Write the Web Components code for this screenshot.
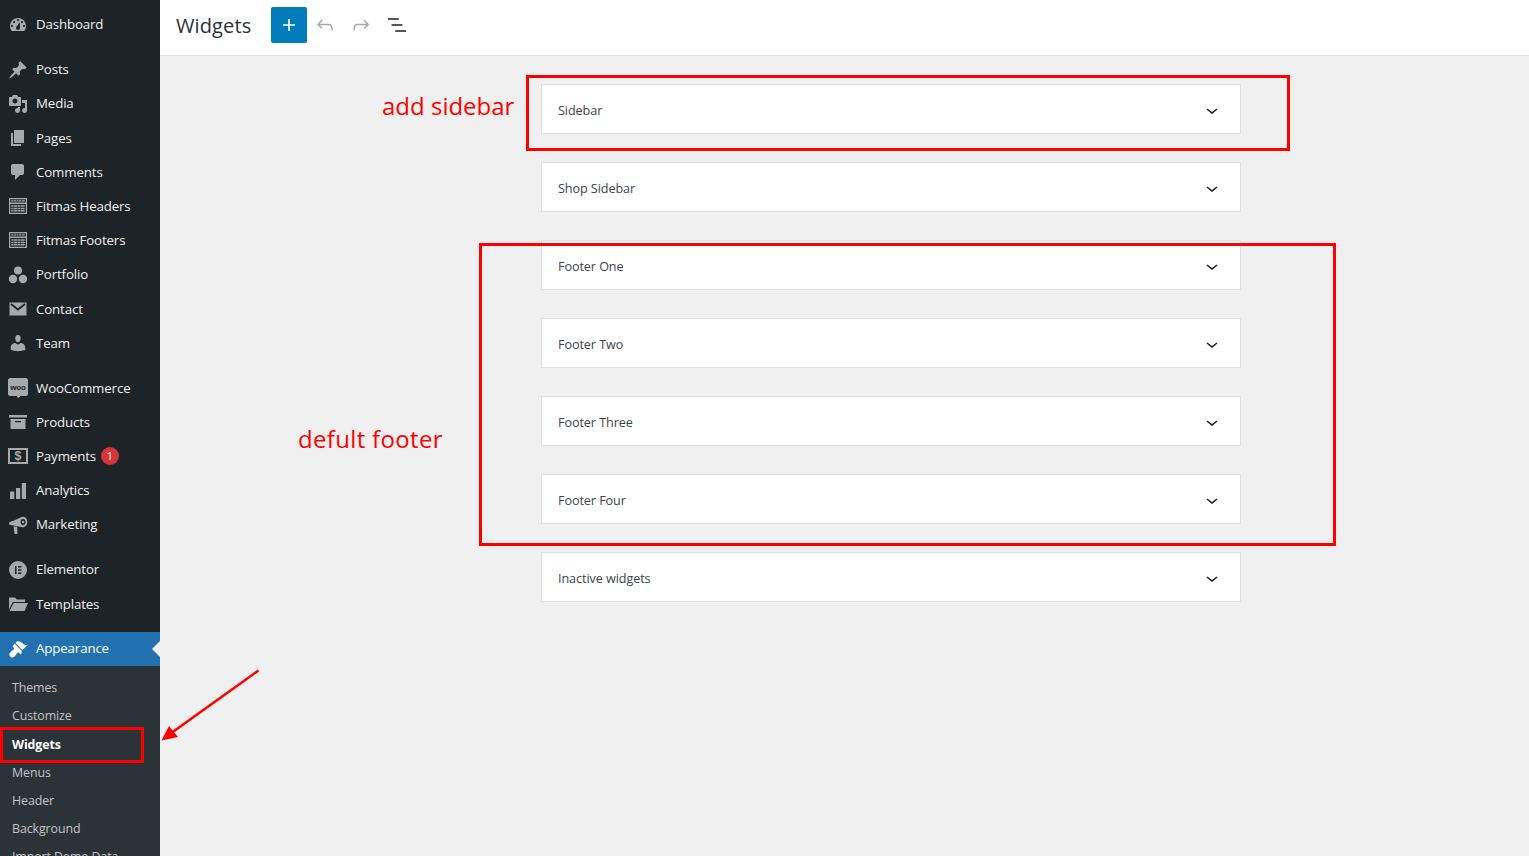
<!DOCTYPE html>
<html lang="en">
<head>
<meta charset="utf-8">
<title>Widgets</title>
<style>
html,body{margin:0;padding:0;height:100%;overflow:hidden;background:#f0f0f0;font-family:"Open Sans","Noto Sans",sans-serif}
</style>
</head>
<body>
<wp-shell>
  <wp-sidebar slot="side">
    <wp-menu-item icon="dashboard">Dashboard</wp-menu-item>
    <wp-menu-item icon="post" sep>Posts</wp-menu-item>
    <wp-menu-item icon="media">Media</wp-menu-item>
    <wp-menu-item icon="pages">Pages</wp-menu-item>
    <wp-menu-item icon="comments">Comments</wp-menu-item>
    <wp-menu-item icon="keyboard">Fitmas Headers</wp-menu-item>
    <wp-menu-item icon="keyboard">Fitmas Footers</wp-menu-item>
    <wp-menu-item icon="portfolio">Portfolio</wp-menu-item>
    <wp-menu-item icon="email">Contact</wp-menu-item>
    <wp-menu-item icon="team">Team</wp-menu-item>
    <wp-menu-item icon="woo" sep>WooCommerce</wp-menu-item>
    <wp-menu-item icon="products">Products</wp-menu-item>
    <wp-menu-item icon="payments" badge="1">Payments</wp-menu-item>
    <wp-menu-item icon="analytics">Analytics</wp-menu-item>
    <wp-menu-item icon="marketing">Marketing</wp-menu-item>
    <wp-menu-item icon="elementor" sep>Elementor</wp-menu-item>
    <wp-menu-item icon="templates">Templates</wp-menu-item>
    <wp-menu-item icon="appearance" sep active>Appearance</wp-menu-item>
    <wp-submenu>
      <wp-sub-item>Themes</wp-sub-item>
      <wp-sub-item>Customize</wp-sub-item>
      <wp-sub-item current>Widgets</wp-sub-item>
      <wp-sub-item>Menus</wp-sub-item>
      <wp-sub-item>Header</wp-sub-item>
      <wp-sub-item>Background</wp-sub-item>
      <wp-sub-item>Import Demo Data</wp-sub-item>
    </wp-submenu>
  </wp-sidebar>
  <wp-topbar slot="top" heading="Widgets"></wp-topbar>
  <wp-widget-area>Sidebar</wp-widget-area>
  <wp-widget-area>Shop Sidebar</wp-widget-area>
  <wp-widget-area>Footer One</wp-widget-area>
  <wp-widget-area>Footer Two</wp-widget-area>
  <wp-widget-area>Footer Three</wp-widget-area>
  <wp-widget-area>Footer Four</wp-widget-area>
  <wp-widget-area>Inactive widgets</wp-widget-area>
</wp-shell>
<annot-layer></annot-layer>

<script>
const ICONS = {
  dashboard:'<path d="M3.76 16h12.48c1.1-1.37 1.76-3.11 1.76-5 0-4.42-3.58-8-8-8s-8 3.58-8 8c0 1.89.66 3.63 1.76 5zM10 4c.55 0 1 .45 1 1s-.45 1-1 1-1-.45-1-1 .45-1 1-1zM6 6c.55 0 1 .45 1 1s-.45 1-1 1-1-.45-1-1 .45-1 1-1zm8 0c.55 0 1 .45 1 1s-.45 1-1 1-1-.45-1-1 .45-1 1-1zm-5.37 5.55L12 7v6c0 1.1-.9 2-2 2s-2-.9-2-2c0-.57.24-1.08.63-1.45zM4 10c.55 0 1 .45 1 1s-.45 1-1 1-1-.45-1-1 .45-1 1-1zm12 0c.55 0 1 .45 1 1s-.45 1-1 1-1-.45-1-1 .45-1 1-1z" fill-rule="evenodd"/>',
  post:'<path d="M10.44 3.02l1.82-1.82 6.36 6.35-1.83 1.82c-1.05-.68-2.48-.57-3.41.36l-.75.75c-.92.93-1.04 2.35-.35 3.41l-1.83 1.82-2.41-2.41-2.8 2.79c-.42.42-3.38 2.71-3.8 2.29s1.86-3.39 2.28-3.81l2.79-2.79L4.1 9.36l1.83-1.82c1.05.69 2.48.57 3.4-.36l.75-.75c.93-.92 1.05-2.35.36-3.41z"/>',
  media:'<path fill-rule="evenodd" d="M13 11V4c0-.55-.45-1-1-1h-1.67L9 1H5L3.67 3H2c-.55 0-1 .45-1 1v7c0 .55.45 1 1 1h10c.55 0 1-.45 1-1zM7 4.5c1.38 0 2.5 1.12 2.5 2.5S8.38 9.5 7 9.5 4.5 8.38 4.5 7 5.62 4.5 7 4.5zM14 6h5v10.5c0 1.38-1.12 2.5-2.5 2.5S14 17.88 14 16.5s1.12-2.5 2.5-2.5c.17 0 .34.02.5.05V9h-3V6zm-4 8.05V13h2v3.5c0 1.38-1.12 2.5-2.5 2.5S7 17.88 7 16.5 8.12 14 9.5 14c.17 0 .34.02.5.05z"/>',
  pages:'<path d="M6 15V2h10v13H6zm-1 1h8v2H3V5h2v11z"/>',
  comments:'<path d="M5 2h9c1.1 0 2 .9 2 2v7c0 1.1-.9 2-2 2h-2l-5 5v-5H5c-1.1 0-2-.9-2-2V4c0-1.1.9-2 2-2z"/>',
  keyboard:'<path fill-rule="evenodd" d="M1 2h18v16H1zM2.200 3.200v3.300h15.600V3.200zM2.200 8v8.800h15.600V8z"/><path d="M3.300 4.200h13.400v1.300H3.300zM3.300 9.300h13.400v1.500H3.300zM3.300 11.700h13.400v1.500H3.300zM3.300 14.100h13.400v1.500H3.300z"/><path d="M5.500 4h.5v1.700h-.5zM8 4h.5v1.700H8zM10.500 4h.5v1.700h-.5zM13 4h.5v1.700H13zM5.500 9.200H6v6.500h-.5zM9 9.200h.5v6.500H9zM12.500 9.200h.5v6.500h-.5z" fill="#1d2327"/>',
  portfolio:'<circle cx="10" cy="5.500" r="4"/><circle cx="5" cy="14" r="4.200"/><circle cx="15" cy="14" r="4.200"/>',
  email:'<path d="M1.500 3.500h17v13h-17z"/><path d="M3 5l7 5.500L17 5" fill="none" stroke="#1d2327" stroke-width="1.800"/>',
  team:'<path d="M10 9.250c-2.270 0-2.730-3.440-2.730-3.440C7 4.020 7.820 2 9.970 2c2.160 0 2.980 2.020 2.710 3.810 0 0-.41 3.440-2.680 3.440zm0 2.570L12.720 10c2.390 0 4.520 2.330 4.520 4.530v2.490s-3.650 1.130-7.240 1.130c-3.650 0-7.240-1.130-7.240-1.130v-2.490c0-2.250 1.940-4.480 4.470-4.480z"/>',
  woo:'<path d="M2 0h16c1 0 2 1 2 2v14c0 1-1 2-2 2h-5.500L10 20.500 9 18H2c-1 0-2-1-2-2V2c0-1 1-2 2-2z"/><text x="10" y="11.500" text-anchor="middle" font-family="Liberation Sans,sans-serif" font-size="8" font-weight="700" fill="#1d2327">woo</text>',
  products:'<path fill-rule="evenodd" d="M1 3h18v2.500H1zM2.500 7h15v10h-15zM7 9v1.300h6V9z"/>',
  payments:'<path fill-rule="evenodd" d="M0 2h20v16H0zM2 4v12h16V4z"/><text x="10" y="14.400" text-anchor="middle" font-family="Liberation Sans,sans-serif" font-size="12.500" font-weight="700">$</text>',
  analytics:'<path d="M2 10.500h4.200V18H2zM8 7h4.200v11H8zM13.800 2H18v16h-4.200z"/>',
  marketing:'<path fill-rule="evenodd" d="M12.500 2.500C15.500.8 19 2 19.300 6.500c.3 4-2.800 6.700-6.300 5.500l-7.500-1.500C3.200 10.200 1 10 1 8.500S3 6.200 5.500 5.700zM15 4c-1.500 0-2.400 1.300-2.400 3s.9 3 2.400 3 2.500-1.300 2.500-3-1-3-2.500-3z"/><path d="M5.500 11.500h3.600L9.500 18.500c0 .6-3 .8-3 0z"/><circle cx="15" cy="7" r="1.200"/>',
  elementor:'<path fill-rule="evenodd" d="M10 1a9 9 0 1 0 0 18 9 9 0 0 0 0-18zM7 6h1.500v8H7zM10 6h3.500v1.500H10zM10 9.250h3.500v1.500H10zM10 12.500h3.500V14H10z"/>',
  templates:'<path d="M1 3.500h6l1.800 2H17V8H4.800L1 15.500zM5.500 9H20l-3.500 8H1.500z"/>',
  appearance:'<path d="M14.480 11.060L7.410 3.990l1.500-1.500c.5-.56 2.300-.47 3.510.32 1.210.8 1.430 1.280 2.910 2.100 1.180.64 2.450 1.260 4.450.85zm-.71.71L6.700 4.700 4.930 6.470c-.39.39-.39 1.020 0 1.410l1.060 1.060c.39.39.39 1.030 0 1.420-.6.6-1.430 1.110-2.210 1.690-.35.26-.7.53-1.010.84-1.340 1.340-1.790 2.230-1.170 3.770.15.36.37.69.64.96.28.27.61.49.97.64 1.530.63 2.430.18 3.800-1.200.31-.31.58-.67.84-1.010.58-.78 1.090-1.600 1.690-2.210.39-.39 1.030-.39 1.420 0l1.060 1.060c.39.39 1.020.39 1.410 0z"/>'
};

function def(name, css, html, setup){
  customElements.define(name, class extends HTMLElement{
    constructor(){
      super();
      this.attachShadow({mode:'open'}).innerHTML = '<style>'+css+'</style>'+html;
    }
    connectedCallback(){ if(setup) setup(this, this.shadowRoot); }
  });
}

def('wp-shell',
  ':host{display:grid;grid-template-columns:160px 1fr;grid-template-rows:56px 1fr;height:856px;overflow:hidden;background:#f0f0f0}'+
  '.side{grid-row:1/3;min-height:0;overflow:hidden}'+
  '.top{grid-column:2}'+
  'main{grid-column:2;display:flex;flex-direction:column;align-items:flex-start;gap:28px;padding:28px 0 0 381px}',
  '<div class="side"><slot name="side"></slot></div><div class="top"><slot name="top"></slot></div><main><slot></slot></main>');

def('wp-sidebar',
  ':host{display:block;width:160px;height:856px;background:#1d2327;padding-top:7.500px;box-sizing:border-box;overflow:hidden}',
  '<slot></slot>');

def('wp-menu-item',
  ':host{display:block;font:13.300px/1 "Open Sans","Noto Sans",sans-serif;letter-spacing:-.14px;color:#f0f0f1}'+
  ':host([sep]){margin-top:10.750px}'+
  '.row{position:relative;display:flex;align-items:center;height:34.200px;box-sizing:border-box}'+
  '.ic{width:36px;flex:none;display:flex;justify-content:center;box-sizing:border-box}'+
  '.t{position:relative;top:.4px}'+
  'svg{width:20px;height:20px;fill:#a7aaad}'+
  '.badge{display:inline-flex;align-items:center;justify-content:center;width:18px;height:18px;border-radius:50%;background:#d63638;color:#fff;font-size:10px;margin-left:5px;letter-spacing:0}'+
  ':host([active]) .row{background:#2271b1;color:#fff;height:34px}'+
  ':host([active]) svg{fill:#fff}'+
  ':host([active]) .row::after{content:"";position:absolute;right:0;top:50%;margin-top:-8px;border:8px solid transparent;border-right-color:#f0f0f0;border-left-width:0}',
  '<div class="row"><span class="ic"></span><span class="t"><slot></slot></span></div>',
  (el,root)=>{
    const ic = root.querySelector('.ic');
    if(!ic.firstChild) ic.innerHTML = '<svg viewBox="0 0 20 20" aria-hidden="true">'+(ICONS[el.getAttribute('icon')]||'')+'</svg>';
    const b = el.getAttribute('badge');
    if(b && !root.querySelector('.badge')){
      const s=document.createElement('span'); s.className='badge'; s.textContent=b;
      root.querySelector('.row').appendChild(s);
    }
  });

def('wp-submenu',
  ':host{display:block;background:#2c3338;padding-top:8.500px;padding-bottom:20px}',
  '<slot></slot>');

def('wp-sub-item',
  ':host{display:block;height:28.200px;padding-left:12px;font:12.400px/28.200px "Open Sans","Noto Sans",sans-serif;letter-spacing:-.1px;color:#c3c4c7;white-space:nowrap}'+
  ':host([current]){color:#fff;font-weight:700}',
  '<slot></slot>');

def('wp-topbar',
  ':host{display:flex;align-items:center;height:56px;box-sizing:border-box;background:#fff;border-bottom:1px solid #e0e0e0;padding:0 0 6px 16px;color:#1e1e1e}'+
  'h1{margin:0 20px 0 0;font:400 20px/1 "Open Sans","Noto Sans",sans-serif;letter-spacing:.12px;color:#2c3338;position:relative;top:1px}'+
  '.b{width:36px;height:36px;display:flex;align-items:center;justify-content:center;border-radius:2px}'+
  '.b svg{width:24px;height:24px;fill:#1e1e1e}'+
  '.add{background:#007cba}.add svg{fill:#fff}'+
  '.off svg{fill:#a9a9a9}',
  '<h1></h1>'+
  '<div class="b add"><svg viewBox="0 0 24 24"><path d="M18 11.200h-5.200V6h-1.600v5.200H6v1.600h5.200V18h1.600v-5.200H18z"/></svg></div>'+
  '<div class="b off"><svg viewBox="0 0 24 24"><path d="M18.300 11.700c-.6-.6-1.400-.9-2.300-.9H6.700l2.900-3.300-1.100-1-4.500 5L8.500 16l1-1-2.700-2.700H16c.5 0 .9.2 1.300.5 1 1 1 3.400 1 4.500v.3h1.500v-.2c0-1.500 0-4.300-1.500-5.700z"/></svg></div>'+
  '<div class="b off"><svg viewBox="0 0 24 24"><path d="M15.600 6.500l-1.100 1 2.900 3.300H8c-.9 0-1.700.3-2.300.9-1.400 1.500-1.400 4.200-1.400 5.600v.2h1.500v-.3c0-1.100 0-3.500 1-4.500.3-.3.7-.5 1.300-.5h9.200L14.500 15l1.100 1.100 4.600-4.600-4.600-5z"/></svg></div>'+
  '<div class="b"><svg viewBox="0 0 24 24"><path d="M13.800 5.200H3v1.500h10.800V5.200zm-3.600 12v1.500H21v-1.500H10.200zm7.200-6H6.600v1.500h10.800v-1.500z"/></svg></div>',
  (el,root)=>{ root.querySelector('h1').textContent = el.getAttribute('heading'); });

def('wp-widget-area',
  ':host{display:flex;align-items:center;justify-content:space-between;width:700px;height:50px;box-sizing:border-box;flex:none;background:#fff;border:1px solid #e0e0e0;padding:0 16px 0 16px;font:12.600px/1 "Open Sans","Noto Sans",sans-serif;letter-spacing:-.07px;color:#3c434a}'+
  'span{position:relative;top:2.500px}'+
  'svg{width:24px;height:24px;fill:#1e1e1e;flex:none;position:relative;top:.5px}',
  '<span><slot></slot></span><svg viewBox="0 0 24 24" aria-hidden="true"><path d="M17.500 11.600L12 16l-5.500-4.400.9-1.200L12 14l4.500-3.600 1 1.200z"/></svg>');

def('annot-layer',
  ':host{position:absolute;left:0;top:0;width:1529px;height:856px;pointer-events:none;overflow:hidden}'+
  '.l{position:absolute;color:#f00;font:400 24px/1 "Open Sans","Noto Sans",sans-serif;white-space:nowrap}'+
  '.b{position:absolute;box-sizing:border-box;border:3px solid #f00}'+
  'svg{position:absolute;left:0;top:0}',
  '<div class="b" style="left:526px;top:75px;width:764px;height:76px"></div>'+
  '<div class="b" style="left:479px;top:243px;width:857px;height:303px"></div>'+
  '<div class="b" style="left:0;top:727px;width:144px;height:36px"></div>'+
  '<div class="l" style="left:382px;top:94px">add sidebar</div>'+
  '<div class="l" style="left:298px;top:427px;letter-spacing:.33px">defult footer</div>'+
  '<svg width="300" height="780" viewBox="0 0 300 780"><path d="M258.500 670.500L172 732.500" stroke="#f00" stroke-width="2.500" fill="none"/><path d="M161.500 740.500L169 726L178 737z" fill="#f00"/></svg>');
</script>
</body>
</html>
